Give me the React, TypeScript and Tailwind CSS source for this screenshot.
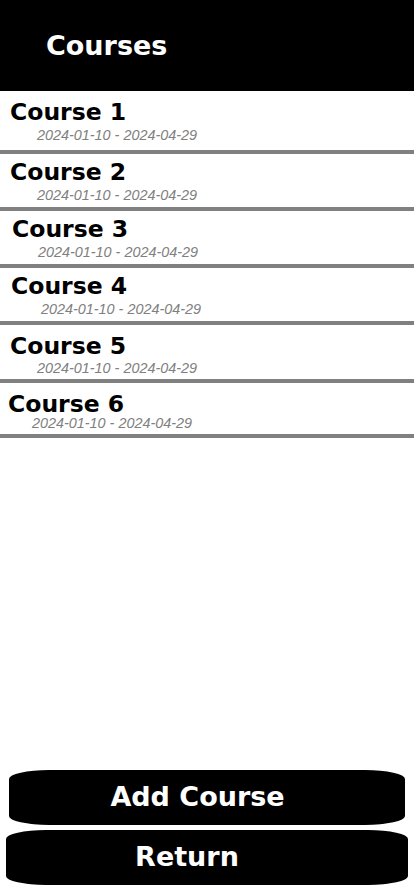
const courses = [
  { name: 'Course 1', dates: '2024-01-10 - 2024-04-29', row: 'pt-[8px] pb-[7px]', title: 'pl-[10px] leading-[26px]', date: 'mt-[2px] pl-[37px] leading-[16px]' },
  { name: 'Course 2', dates: '2024-01-10 - 2024-04-29', row: 'pt-[5px] pb-[4px]', title: 'pl-[10px] leading-[26px]', date: 'mt-[2px] pl-[37px] leading-[16px]' },
  { name: 'Course 3', dates: '2024-01-10 - 2024-04-29', row: 'pt-[5px] pb-[4px]', title: 'pl-[12px] leading-[26px]', date: 'mt-[2px] pl-[38px] leading-[16px]' },
  { name: 'Course 4', dates: '2024-01-10 - 2024-04-29', row: 'pt-[5px] pb-[4px]', title: 'pl-[11px] leading-[26px]', date: 'mt-[2px] pl-[41px] leading-[16px]' },
  { name: 'Course 5', dates: '2024-01-10 - 2024-04-29', row: 'pt-[8px] pb-[3px]', title: 'pl-[10px] leading-[26px]', date: 'mt-[1px] pl-[37px] leading-[16px]' },
  { name: 'Course 6', dates: '2024-01-10 - 2024-04-29', row: 'pt-[9px] pb-[4px]', title: 'pl-[8px] leading-[24px]', date: 'pl-[32px] leading-[14px]' },
]

export default function App() {
  return (
    <div className="flex h-[896px] w-[414px] flex-col bg-white font-['DejaVu_Sans',sans-serif]">
      <header className="flex h-[91px] items-center bg-black pl-[46px]">
        <h1 className="text-[27px] font-bold leading-[32px] text-white">Courses</h1>
      </header>

      <ul>
        {courses.map((c) => (
          <li key={c.name} className="border-b-4 border-[#808080]">
            <div className={c.row}>
              <div className={`${c.title} text-[23.5px] font-bold text-black`}>{c.name}</div>
              <div className={`${c.date} font-['Liberation_Sans',Arial,sans-serif] text-[14.4px] italic text-[#808080]`}>
                {c.dates}
              </div>
            </div>
          </li>
        ))}
      </ul>

      <div className="flex-1" />

      <div className="flex flex-col pb-[11px]">
        <button className="mx-[9px] flex h-[55px] items-center justify-center rounded-[40px/9px] bg-black pr-[19px] text-[27px] font-bold text-white">
          Add Course
        </button>
        <button className="mx-[6px] mt-[5px] flex h-[55px] items-center justify-center rounded-[40px/9px] bg-black pr-[40px] text-[27px] font-bold text-white">
          Return
        </button>
      </div>
    </div>
  )
}
